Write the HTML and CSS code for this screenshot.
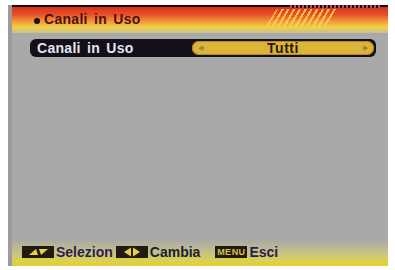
FILE: index.html
```html
<!DOCTYPE html>
<html>
<head>
<meta charset="utf-8">
<link rel="stylesheet" href="styles.css">
</head>
<body>
<div class="screen">
  <div class="header">
    <div class="title"><span class="dot"></span>Canali in Uso</div>
    <div class="hatch"></div>
    <div class="dashes"></div>
  </div>
  <div class="body">
    <div class="row">
      <div class="label">Canali in Uso</div>
      <div class="value">
        <span class="arr">&#9664;</span>
        <span class="val">Tutti</span>
        <span class="arr">&#9654;</span>
      </div>
    </div>
  </div>
  <div class="footer">
    <span class="key"><svg width="22" height="8" viewBox="0 0 22 8"><polygon points="2,7 9,1 11,7" fill="#e8d040"/><polygon points="12,1 21,1 14,7" fill="#e8d040"/></svg></span>
    <span class="ftxt sel">Selezion</span>
    <span class="key"><svg width="22" height="10" viewBox="0 0 22 10"><polygon points="3,5 10,0.5 10,9.5" fill="#e8d040"/><polygon points="19,5 12,0.5 12,9.5" fill="#e8d040"/></svg></span>
    <span class="ftxt">Cambia</span>
    <span class="key menu">MENU</span>
    <span class="ftxt sel">Esci</span>
  </div>
</div>
</body>
</html>
```
FILE: styles.css
```css
html, body {
  margin: 0;
  padding: 0;
  background: #ffffff;
}
body {
  width: 395px;
  height: 270px;
  overflow: hidden;
  font-family: "Liberation Sans", Arial, sans-serif;
}
.screen {
  margin: 5px 7px 0 8px;
  width: 380px;
  height: 261px;
  display: flex;
  flex-direction: column;
  background: #a9a9aa;
  border-left: 4px solid #9c9c9e;
  box-sizing: border-box;
}
.header {
  position: relative;
  height: 26px;
  border-top: 2px solid #181010;
  background: linear-gradient(to bottom, #d83020 0%, #e85228 30%, #f09838 55%, #f0d048 78%, #c8c090 100%);
  display: flex;
  align-items: center;
}
.title {
  display: flex;
  align-items: center;
  margin-left: 22px;
  margin-top: -2px;
  font-weight: bold;
  font-size: 14px;
  color: #501010;
  letter-spacing: 0.3px;
  word-spacing: 2px;
}
.dot {
  width: 6px;
  height: 6px;
  border-radius: 50%;
  background: #111;
  margin-right: 4px;
  margin-top: 4px;
}
.hatch {
  position: absolute;
  left: 253px;
  top: 2px;
  width: 72px;
  height: 18px;
  background: repeating-linear-gradient(-60deg, rgba(255,210,80,0.85) 0 2px, transparent 2px 5px);
  clip-path: polygon(12px 0, 100% 0, calc(100% - 12px) 100%, 0 100%);
}
.dashes {
  position: absolute;
  left: 278px;
  top: -2px;
  width: 90px;
  height: 3px;
  background: repeating-linear-gradient(90deg, #c05050 0 2px, #181010 2px 4px);
}
.body {
  flex: 1;
  padding: 6px 10px 0 18px;
}
.row {
  display: flex;
  align-items: center;
  height: 18px;
  width: 346px;
  background: #14101a;
  border-radius: 6px;
  padding: 0 2px 0 7px;
  box-sizing: border-box;
}
.label {
  flex: 0 0 155px;
  color: #e8e4f4;
  font-weight: bold;
  font-size: 14px;
  letter-spacing: 0.3px;
  word-spacing: 2px;
}
.value {
  flex: 1;
  height: 14px;
  background: #dcb438;
  border-radius: 7px;
  display: flex;
  align-items: center;
  justify-content: space-between;
  padding: 0 6px;
  box-shadow: inset 0 0 0 1px #b08820;
}
.arr {
  font-size: 7px;
  color: #8a8a40;
}
.val {
  font-weight: bold;
  font-size: 14px;
  color: #2a1a08;
  letter-spacing: 0.5px;
}
.footer {
  height: 26px;
  background: linear-gradient(to bottom, #aaa9a6 0%, #c4c08c 45%, #dcd050 80%, #e4d030 100%);
  display: flex;
  align-items: center;
  padding-left: 10px;
  padding-bottom: 2px;
  box-sizing: border-box;
}
.key {
  width: 32px;
  height: 12px;
  background: #201c14;
  display: flex;
  align-items: center;
  justify-content: center;
  box-sizing: border-box;
}
.key.menu {
  margin-left: 12px;
  font-size: 9px;
  font-weight: bold;
  color: #d8c040;
  letter-spacing: 0.5px;
}
.ftxt {
  font-weight: bold;
  font-size: 14px;
  color: #1c2030;
  margin-left: 2px;
  margin-right: 3px;
}
.ftxt.sel {
  color: #2a1c50;
}
```
